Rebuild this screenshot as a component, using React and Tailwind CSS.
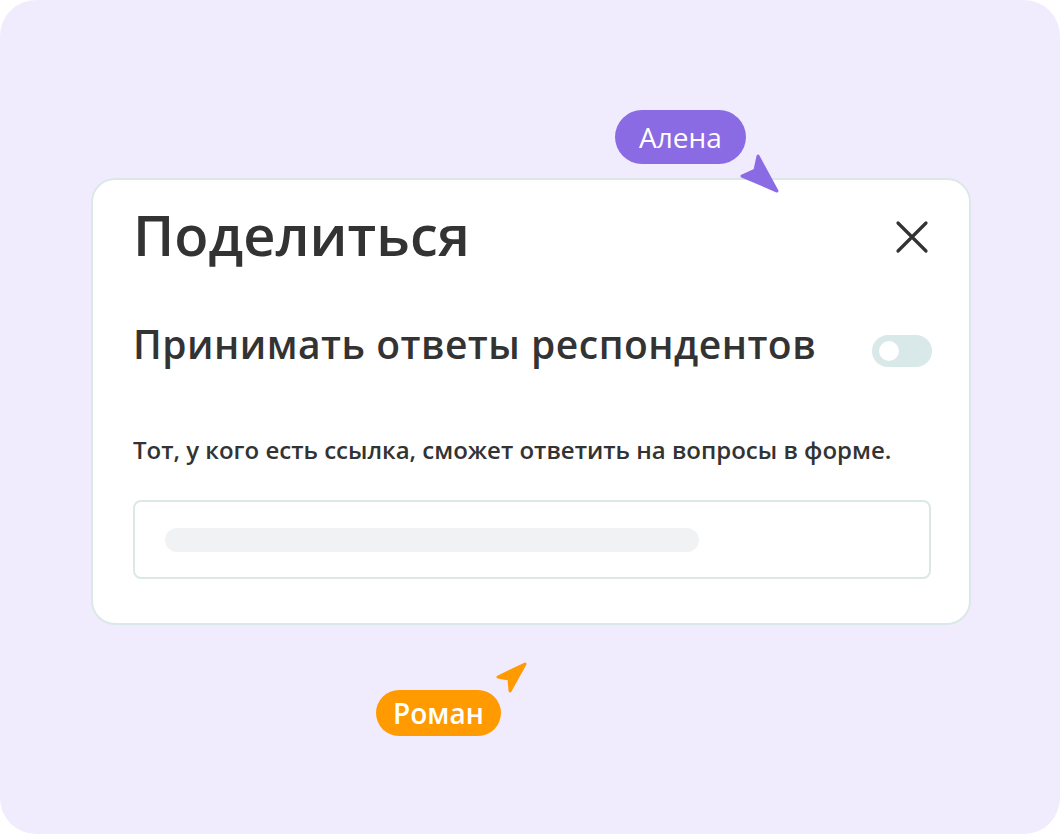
import React from "react";

function Cursor({ className, points, color }) {
    return (
        <svg className={className} width="48" height="48" viewBox="0 0 48 48">
            <polygon points={points} fill={color} stroke={color} strokeWidth="3" strokeLinejoin="round" />
        </svg>
    )
}

export default function App() {
    return (
        <div className="w-[1060px] h-[834px] bg-white" style={{ fontFamily: '"Open Sans", "Noto Sans", sans-serif' }}>
            <div className="relative w-full h-full bg-[#F0ECFE] rounded-[36px] pt-[178px] pl-[91px]">
                <div className="w-[880px] h-[447px] bg-white rounded-[24px] border-2 border-[#DCE8E8] pl-[40px] pr-[38px] pt-[22px] text-[#333333]">
                    <div className="flex items-start justify-between">
                        <h1 className="text-[56px] leading-[64px] font-semibold">Поделиться</h1>
                        <svg width="34" height="34" viewBox="0 0 34 34" className="mt-[18px] mr-[2px]">
                            <path d="M3 3 L31 31 M31 3 L3 31" stroke="#333333" strokeWidth="3.2" strokeLinecap="round" />
                        </svg>
                    </div>
                    <div className="flex items-start justify-between mt-[54px]">
                        <div className="text-[39px] leading-[48px] font-semibold tracking-[0.5px]">Принимать ответы респондентов</div>
                        <div className="mt-[15px] mr-[-1px] w-[60px] h-[32px] rounded-full bg-[#D9E8E8] flex items-center pl-[7px]">
                            <div className="w-[20px] h-[20px] rounded-full bg-white"></div>
                        </div>
                    </div>
                    <p className="mt-[66px] text-[24px] leading-[32px] font-semibold">Тот, у кого есть ссылка, сможет ответить на вопросы в форме.</p>
                    <div className="mt-[34px] h-[79px] border-2 border-[#DCE8E8] rounded-[8px] flex items-center pl-[30px]">
                        <div className="w-[534px] h-[24px] rounded-full bg-[#F1F2F4]"></div>
                    </div>
                </div>

                <div className="absolute left-[615px] top-[110px] h-[54px] px-[24px] rounded-full bg-[#8B6BE3] text-white text-[28px] font-medium flex items-center">Алена</div>
                <Cursor className="absolute left-[736px] top-[150px]" color="#8B6BE3" points="41,41 22,6 19,20 6,26" />

                <div className="absolute left-[376px] top-[690px] h-[46px] px-[17px] rounded-full bg-[#FF9A00] text-white text-[28px] font-semibold flex items-center">Роман</div>
                <Cursor className="absolute left-[494px] top-[658px]" color="#FF9A00" points="31,6 4,19 15,21 16,33" />
            </div>
        </div>
    )
}
